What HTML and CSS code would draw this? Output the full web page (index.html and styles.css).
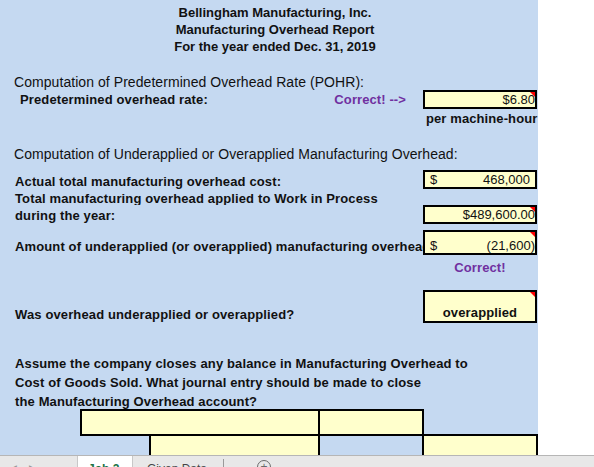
FILE: index.html
```html
<!DOCTYPE html>
<html>
<head>
<meta charset="utf-8">
<link rel="stylesheet" href="styles.css">
</head>
<body>
<div class="sheet">
  <div class="header">
    <div>Bellingham Manufacturing, Inc.</div>
    <div>Manufacturing Overhead Report</div>
    <div>For the year ended Dec. 31, 2019</div>
  </div>

  <div class="comp comp1">Computation of Predetermined Overhead Rate (POHR):</div>
  <div class="row row-pohr">
    <div class="label label-pohr"><span>Predetermined overhead rate:</span><span class="correct correct-arrow">Correct! --&gt;</span></div>
    <div class="box flag box-right"><span>$6.80</span></div>
  </div>
  <div class="per">per machine-hour</div>

  <div class="comp comp2">Computation of Underapplied or Overapplied Manufacturing Overhead:</div>
  <div class="row row-actual">
    <div class="label">Actual total manufacturing overhead cost:</div>
    <div class="box box-acct"><span>$</span><span>468,000</span></div>
  </div>
  <div class="row row-total">
    <div class="label">Total manufacturing overhead applied to Work in Process</div>
  </div>
  <div class="row row-during">
    <div class="label">during the year:</div>
    <div class="box flag box-right"><span>$489,600.00</span></div>
  </div>
  <div class="row row-amount">
    <div class="label label-bottom">Amount of underapplied (or overapplied) manufacturing overhead:</div>
    <div class="box flag box-acct box-bottom"><span>$</span><span class="neg">(21,600)</span></div>
  </div>
  <div class="row row-correct">
    <div class="label"></div>
    <div class="correct correct-center">Correct!</div>
  </div>
  <div class="row row-was">
    <div class="label label-bottom">Was overhead underapplied or overapplied?</div>
    <div class="box flag box-center"><span>overapplied</span></div>
  </div>

  <div class="para">
    <div>Assume the company closes any balance in Manufacturing Overhead to</div>
    <div>Cost of Goods Sold. What journal entry should be made to close</div>
    <div>the Manufacturing Overhead account?</div>
  </div>

  <table class="journal">
    <tr class="jr1">
      <td class="blank-c"></td>
      <td class="y" colspan="2"></td>
      <td class="y c3"></td>
      <td class="blank-c c4"></td>
    </tr>
    <tr class="jr2">
      <td class="blank-c"></td>
      <td class="blank-c c1"></td>
      <td class="y c2"></td>
      <td class="b c3"></td>
      <td class="y c4"></td>
    </tr>
  </table>
</div>
<div class="tabs">
  <div class="nav"><span class="arr">&#9664;</span><span class="arr">&#9654;</span></div>
  <div class="tab active">Job 2</div>
  <div class="tab">Given Data</div>
  <div class="sep"></div>
  <div class="plus">+</div>
</div>
</body>
</html>
```

FILE: styles.css
```css
html, body {
  margin: 0;
  padding: 0;
  background: #ffffff;
}

body {
  font-family: "Liberation Sans", Arial, sans-serif;
  color: #111111;
  width: 594px;
  height: 467px;
  overflow: hidden;
}

.sheet {
  width: 538px;
  height: 455px;
  background: #c5d9f1;
  overflow: hidden;
}

.header {
  padding-top: 4px;
  padding-left: 12px;
  text-align: center;
  font-weight: bold;
  font-size: 13px;
  line-height: 17px;
}

.comp {
  font-size: 14px;
  line-height: 16px;
  padding-left: 14px;
  white-space: nowrap;
  letter-spacing: 0.06px;
}

.comp1 { margin-top: 19px; }
.comp2 { margin-top: 19px; }

.row {
  display: flex;
  width: 537px;
}

.label {
  width: 423px;
  flex: none;
  box-sizing: border-box;
  padding-left: 15px;
  font-weight: bold;
  font-size: 13px;
  letter-spacing: 0.13px;
  white-space: nowrap;
  overflow: hidden;
  display: flex;
  align-items: center;
}

.label-bottom {
  align-items: flex-end;
  padding-bottom: 1px;
  line-height: 15px;
}

.label-pohr {
  padding-left: 20px;
  justify-content: space-between;
  padding-right: 17px;
}

.correct {
  color: #7030a0;
  font-weight: bold;
  font-size: 13px;
  letter-spacing: 0.1px;
}

.box {
  width: 114px;
  flex: none;
  box-sizing: border-box;
  border: 2px solid #000000;
  background: #ffffcc;
  position: relative;
  display: flex;
  align-items: center;
  font-size: 13px;
  line-height: 15px;
  color: #111111;
}

.flag::after {
  content: "";
  position: absolute;
  top: 0;
  right: 0;
  width: 0;
  height: 0;
  border-top: 5px solid #ff0000;
  border-left: 5px solid transparent;
}

.box-right {
  justify-content: flex-end;
  padding-right: 0;
}

.box-acct {
  justify-content: space-between;
  padding-left: 5px;
  padding-right: 5px;
}

.box-acct .neg {
  margin-right: -5px;
}

.box-bottom {
  align-items: flex-end;
  padding-bottom: 0;
}

.box-center {
  justify-content: center;
  align-items: flex-end;
  padding-bottom: 1px;
  font-weight: bold;
  letter-spacing: 0.13px;
}

.row-pohr { height: 19px; }

.per {
  margin-top: 2px;
  padding-left: 426px;
  font-weight: bold;
  font-size: 13px;
  line-height: 16px;
  letter-spacing: 0.1px;
  white-space: nowrap;
}

.row-actual { height: 19px; margin-top: 8px; }
.row-actual .label { padding-top: 3px; }
.row-total { height: 16px; }
.row-total .label { padding-top: 2px; }
.row-during { height: 19px; }
.row-during .label { padding-top: 1px; }
.row-amount { height: 25px; margin-top: 6px; }
.row-correct { height: 16px; margin-top: 5px; }

.correct-center {
  width: 114px;
  text-align: center;
  line-height: 16px;
}

.row-was { height: 33px; margin-top: 14px; }

.para {
  margin-top: 31px;
  height: 55px;
  padding-left: 15px;
  font-weight: bold;
  font-size: 13px;
  line-height: 19px;
  letter-spacing: 0.13px;
  white-space: nowrap;
}

.journal {
  border-collapse: collapse;
  table-layout: fixed;
  margin-left: -1px;
}

.journal td {
  padding: 0;
}

.jr1 td { height: 23px; }
.jr2 td { height: 30px; }

.journal td.blank-c { width: 82px; }
.journal td.c1 { width: 68px; }
.journal td.c2 { width: 168px; }
.journal td.c3 { width: 103px; }
.journal td.c4 { width: 113px; }

.journal td.y {
  background: #ffffcc;
  border: 2px solid #000000;
}

.journal td.b {
  border: 2px solid #000000;
}

.tabs {
  height: 11px;
  border-top: 1px solid #b6b6b6;
  background: #e8e8e8;
  display: flex;
  overflow: hidden;
  font-family: "Liberation Sans", Arial, sans-serif;
  font-size: 12px;
}

.nav {
  width: 77px;
  flex: none;
  display: flex;
  gap: 12px;
  padding-left: 10px;
  padding-top: 7px;
  box-sizing: border-box;
  color: #9a9a9a;
  font-size: 9px;
}

.tab {
  flex: none;
  padding-top: 6px;
  line-height: 14px;
  box-sizing: border-box;
  color: #444444;
}

.tab.active {
  width: 56px;
  background: #ffffff;
  border-left: 1px solid #c8c8c8;
  border-right: 1px solid #c8c8c8;
  color: #217346;
  font-weight: bold;
  padding-left: 10px;
}

.tab:not(.active) {
  width: 90px;
  padding-left: 14px;
}

.sep {
  width: 1px;
  height: 8px;
  margin-top: 3px;
  background: #9a9a9a;
  flex: none;
}

.plus {
  width: 14px;
  height: 14px;
  margin-left: 33px;
  margin-top: 4px;
  border: 1px solid #6a6a6a;
  border-radius: 50%;
  box-sizing: border-box;
  text-align: center;
  line-height: 12px;
  font-size: 12px;
  color: #6a6a6a;
  flex: none;
}
```
